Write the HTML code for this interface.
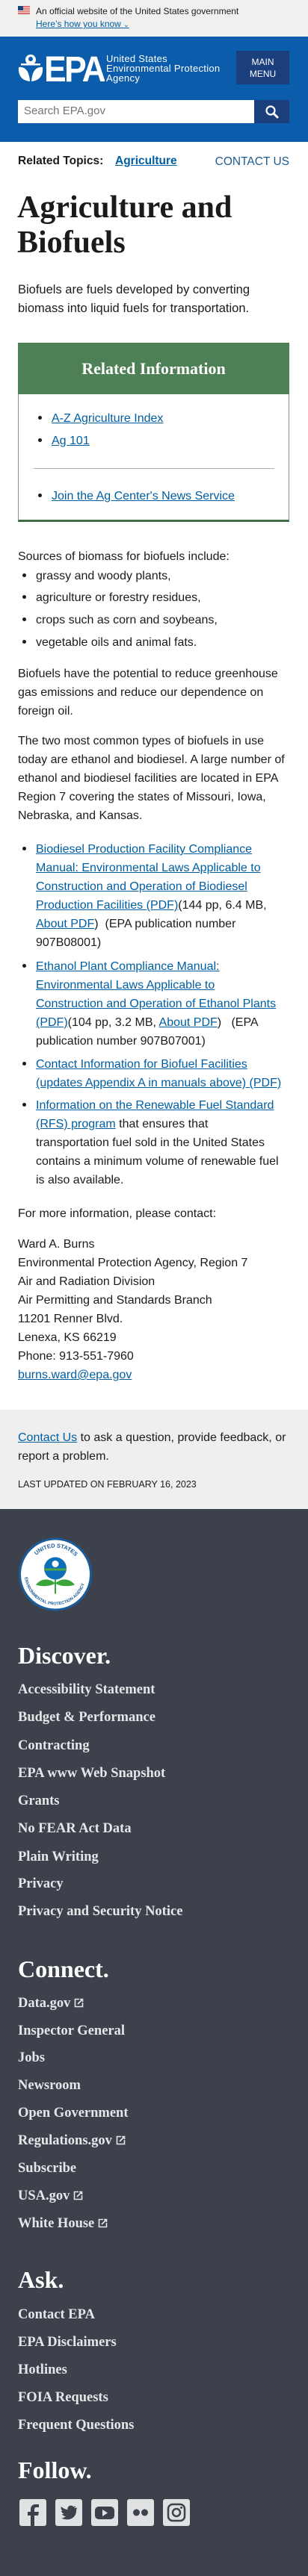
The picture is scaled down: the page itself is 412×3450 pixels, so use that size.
<!DOCTYPE html>
<html><head><meta charset="utf-8">
<style>
*{margin:0;padding:0;box-sizing:border-box}
body{width:412px;height:3450px;position:relative;background:#fff;font-family:"Liberation Sans",sans-serif;color:#1b1b1b;overflow:hidden}
.a{position:absolute;white-space:nowrap}
a{color:#005ea2;text-decoration:underline}
.t{font-size:16px;line-height:25px}
.ser{font-family:"Liberation Serif",serif;font-weight:bold}
.fl{position:absolute;left:24px;font-family:"Liberation Serif",serif;font-weight:bold;font-size:18.5px;color:#e6e6e8;white-space:nowrap;line-height:22px}
.fh{position:absolute;left:24px;font-family:"Liberation Serif",serif;font-weight:bold;font-size:32px;color:#fff;line-height:36px}
.ext{display:inline-block;width:13px;height:13px;margin-left:5px;vertical-align:-1px}
.ico{position:absolute;top:3347px;width:36px;height:36px;background:#dfe1e2;border-radius:3px;overflow:hidden}
.dot{position:absolute;width:5px;height:5px;border-radius:50%;background:#1b1b1b}
</style></head><body>
<div style="position:absolute;left:0;top:0;width:412px;height:49px;background:#f0f0f0"></div>
<svg class="a" style="left:24px;top:8px" width="16" height="11" viewBox="0 0 16 11"><rect width="16" height="11" fill="#fff"/><g fill="#d83933"><rect y="0" width="16" height="1.2"/><rect y="2.4" width="16" height="1.2"/><rect y="4.8" width="16" height="1.2"/><rect y="7.2" width="16" height="1.2"/><rect y="9.6" width="16" height="1.4"/></g><rect width="7" height="6" fill="#1a4480"/></svg>
<div class="a" style="left:48px;top:8px;font-size:12px;line-height:14px">An official website of the United States government</div>
<div class="a" style="left:48px;top:25px;font-size:12px;line-height:14px;color:#005ea2;text-decoration:underline">Here’s how you know <span style="text-decoration:none;font-size:9px">&#8964;</span></div>
<div style="position:absolute;left:0;top:49px;width:412px;height:141px;background:#0b5cab"></div>
<svg class="a" style="left:24px;top:72px" width="116" height="38" viewBox="0 0 116 38">
<g fill="#fff">
<circle cx="17" cy="8" r="7"/><circle cx="17" cy="7" r="3" fill="#0b5cab"/><rect x="4" y="13" width="26" height="2.5"/>
<path d="M1 18 C9 17 15 22 16 37 C6 36 0 30 1 18Z"/><path d="M33 18 C25 17 19 22 18 37 C28 36 34 30 33 18Z"/>
<text x="35" y="37" font-family="Liberation Sans" font-weight="bold" font-size="48" letter-spacing="-3" textLength="80" lengthAdjust="spacingAndGlyphs">EPA</text>
</g></svg>
<div class="a" style="left:142px;top:72px;color:#fff;font-size:13px;line-height:13px;letter-spacing:0.3px">United States<br>Environmental Protection<br>Agency</div>
<div class="a" style="left:316px;top:68px;width:71px;height:45px;background:#1b3e7d;color:#fff;font-size:12px;line-height:16px;text-align:center;padding-top:7px">MAIN<br>MENU</div>
<div class="a" style="left:24px;top:134px;width:316px;height:31px;background:#fff;font-size:15px;color:#71767a;padding:6px 8px">Search EPA.gov</div>
<div class="a" style="left:340px;top:134px;width:47px;height:31px;background:#1b3e7d"></div>
<svg class="a" style="left:354px;top:140px" width="20" height="20" viewBox="0 0 20 20"><circle cx="8" cy="8" r="5.5" fill="none" stroke="#fff" stroke-width="2.2"/><path d="M12 12 L17 17" stroke="#fff" stroke-width="3" stroke-linecap="round"/></svg>
<div class="a" style="left:24px;top:206px;font-size:15.5px;font-weight:bold;line-height:20px">Related Topics:</div>
<a class="a" style="left:154px;top:206px;font-size:15.5px;font-weight:bold;line-height:20px">Agriculture</a>
<div class="a" style="right:25px;top:207px;font-size:15.5px;color:#1f5a8f;line-height:20px">CONTACT US</div>
<div class="a ser" style="left:23px;top:255px;font-size:42px;line-height:47px">Agriculture and<br>Biofuels</div>
<div class="a t" style="left:24px;top:376px;font-size:16.5px">Biofuels are fuels developed by converting<br>biomass into liquid fuels for transportation.</div>
<div class="a" style="left:24px;top:459px;width:363px;height:240px;border:1px solid #8a8f94;border-bottom:3px solid #3f6b45"></div>
<div class="a ser" style="left:24px;top:459px;width:363px;height:69px;background:#4e8055;color:#fff;font-size:22px;text-align:center;line-height:69px">Related Information</div>
<div class="dot" style="left:51px;top:557px"></div><a class="a t" style="left:69px;top:548px">A-Z Agriculture Index</a>
<div class="dot" style="left:51px;top:587px"></div><a class="a t" style="left:69px;top:578px">Ag 101</a>
<div class="a" style="left:45px;top:627px;width:322px;height:1px;background:#a9aeb1"></div>
<div class="dot" style="left:51px;top:661px"></div><a class="a t" style="left:69px;top:652px">Join the Ag Center's News Service</a>
<div class="a t" style="left:24px;top:733px">Sources of biomass for biofuels include:</div>
<div class="dot" style="left:30px;top:768px"></div><div class="a t" style="left:48px;top:759px">grassy and woody plants,</div>
<div class="dot" style="left:30px;top:797px"></div><div class="a t" style="left:48px;top:788px">agriculture or forestry residues,</div>
<div class="dot" style="left:30px;top:827px"></div><div class="a t" style="left:48px;top:818px">crops such as corn and soybeans,</div>
<div class="dot" style="left:30px;top:857px"></div><div class="a t" style="left:48px;top:848px">vegetable oils and animal fats.</div>
<div class="a t" style="left:24px;top:890px">Biofuels have the potential to reduce greenhouse<br>gas emissions and reduce our dependence on<br>foreign oil.</div>
<div class="a t" style="left:24px;top:980px">The two most common types of biofuels in use<br>today are ethanol and biodiesel. A large number of<br>ethanol and biodiesel facilities are located in EPA<br>Region 7 covering the states of Missouri, Iowa,<br>Nebraska, and Kansas.</div>
<div class="dot" style="left:30px;top:1134px"></div>
<div class="a t" style="left:48px;top:1125px"><a>Biodiesel Production Facility Compliance</a><br><a>Manual: Environmental Laws Applicable to</a><br><a>Construction and Operation of Biodiesel</a><br><a>Production Facilities (PDF)</a>(144 pp, 6.4 MB,<br><a>About PDF</a>)&nbsp; (EPA publication number<br>907B08001)</div>
<div class="dot" style="left:30px;top:1291px"></div>
<div class="a t" style="left:48px;top:1282px"><a>Ethanol Plant Compliance Manual:</a><br><a>Environmental Laws Applicable to</a><br><a>Construction and Operation of Ethanol Plants</a><br><a>(PDF)</a>(104 pp, 3.2 MB, <a>About PDF</a>)&nbsp;&nbsp; (EPA<br>publication number 907B07001)</div>
<div class="dot" style="left:30px;top:1422px"></div>
<div class="a t" style="left:48px;top:1413px"><a>Contact Information for Biofuel Facilities</a><br><a>(updates Appendix A in manuals above) (PDF)</a></div>
<div class="dot" style="left:30px;top:1477px"></div>
<div class="a t" style="left:48px;top:1468px"><a>Information on the Renewable Fuel Standard</a><br><a>(RFS) program</a> that ensures that<br>transportation fuel sold in the United States<br>contains a minimum volume of renewable fuel<br>is also available.</div>
<div class="a t" style="left:24px;top:1613px">For more information, please contact:</div>
<div class="a t" style="left:24px;top:1654px">Ward A. Burns<br>Environmental Protection Agency, Region 7<br>Air and Radiation Division<br>Air Permitting and Standards Branch<br>11201 Renner Blvd.<br>Lenexa, KS 66219<br>Phone: 913-551-7960<br><a>burns.ward@epa.gov</a></div>
<div class="a" style="left:0;top:1888px;width:412px;height:133px;background:#efefef"></div>
<div class="a t" style="left:24px;top:1913px"><a>Contact Us</a> to ask a question, provide feedback, or<br>report a problem.</div>
<div class="a" style="left:24px;top:1980px;font-size:12.5px;line-height:16px">LAST UPDATED ON FEBRUARY 16, 2023</div>
<div class="a" style="left:0;top:2021px;width:412px;height:1429px;background:#3d414c"></div>
<svg class="a" style="left:24px;top:2057px" width="100" height="103" viewBox="0 0 100 100">
<circle cx="50" cy="50" r="49" fill="#1a5c9a"/><circle cx="50" cy="50" r="46" fill="#fff"/>
<defs><path id="arc" d="M14 50 A36 36 0 1 1 86 50"/><path id="arc2" d="M9 50 A41 41 0 0 0 91 50"/></defs>
<text font-size="7.5" font-weight="bold" fill="#1a5c9a" font-family="Liberation Sans"><textPath href="#arc" startOffset="25%">UNITED STATES</textPath></text>
<text font-size="5.6" font-weight="bold" fill="#1a5c9a" font-family="Liberation Sans"><textPath href="#arc2" startOffset="3%">ENVIRONMENTAL PROTECTION AGENCY</textPath></text>
<circle cx="50" cy="42" r="15" fill="#0e6fb8"/><rect x="35" y="42" width="30" height="3" fill="#4aa54a"/><circle cx="50" cy="36" r="4.5" fill="#fff"/>
<path d="M50 62 C41 54 30 56 24 64 C33 67 44 66 50 62Z M50 62 C59 54 70 56 76 64 C67 67 56 66 50 62Z" fill="#3aa53a"/><path d="M50 57 L50 76" stroke="#3aa53a" stroke-width="2"/>
</svg>
<div class="fh" style="top:2199px">Discover.</div>
<div class="fl" style="top:2252px">Accessibility Statement</div>
<div class="fl" style="top:2289px">Budget &amp; Performance</div>
<div class="fl" style="top:2327px">Contracting</div>
<div class="fl" style="top:2364px">EPA www Web Snapshot</div>
<div class="fl" style="top:2401px">Grants</div>
<div class="fl" style="top:2438px">No FEAR Act Data</div>
<div class="fl" style="top:2476px">Plain Writing</div>
<div class="fl" style="top:2512px">Privacy</div>
<div class="fl" style="top:2549px">Privacy and Security Notice</div>
<div class="fh" style="top:2619px">Connect.</div>
<div class="fl" style="top:2672px">Data.gov<svg class="ext" viewBox="0 0 13 13"><path d="M7 1.5 H1.5 V11.5 H11.5 V6" fill="none" stroke="#e6e6e8" stroke-width="1.6"/><path d="M5 8 L11.5 1.5 M8 1.5 H11.5 V5" fill="none" stroke="#e6e6e8" stroke-width="1.6"/></svg></div>
<div class="fl" style="top:2709px">Inspector General</div>
<div class="fl" style="top:2745px">Jobs</div>
<div class="fl" style="top:2782px">Newsroom</div>
<div class="fl" style="top:2819px">Open Government</div>
<div class="fl" style="top:2856px">Regulations.gov<svg class="ext" viewBox="0 0 13 13"><path d="M7 1.5 H1.5 V11.5 H11.5 V6" fill="none" stroke="#e6e6e8" stroke-width="1.6"/><path d="M5 8 L11.5 1.5 M8 1.5 H11.5 V5" fill="none" stroke="#e6e6e8" stroke-width="1.6"/></svg></div>
<div class="fl" style="top:2893px">Subscribe</div>
<div class="fl" style="top:2930px">USA.gov<svg class="ext" viewBox="0 0 13 13"><path d="M7 1.5 H1.5 V11.5 H11.5 V6" fill="none" stroke="#e6e6e8" stroke-width="1.6"/><path d="M5 8 L11.5 1.5 M8 1.5 H11.5 V5" fill="none" stroke="#e6e6e8" stroke-width="1.6"/></svg></div>
<div class="fl" style="top:2967px">White House<svg class="ext" viewBox="0 0 13 13"><path d="M7 1.5 H1.5 V11.5 H11.5 V6" fill="none" stroke="#e6e6e8" stroke-width="1.6"/><path d="M5 8 L11.5 1.5 M8 1.5 H11.5 V5" fill="none" stroke="#e6e6e8" stroke-width="1.6"/></svg></div>
<div class="fh" style="top:3035px">Ask.</div>
<div class="fl" style="top:3089px">Contact EPA</div>
<div class="fl" style="top:3126px">EPA Disclaimers</div>
<div class="fl" style="top:3163px">Hotlines</div>
<div class="fl" style="top:3200px">FOIA Requests</div>
<div class="fl" style="top:3237px">Frequent Questions</div>
<div class="fh" style="top:3290px">Follow.</div>
<div class="ico" style="left:26px"><svg width="36" height="36" viewBox="0 0 36 36"><path d="M20 36 V22 H25 L26 17 H20 V14 C20 12 21 11 23 11 H26 V7 H22 C17 7 15 10 15 14 V17 H11 V22 H15 V36Z" fill="#3d414c"/></svg></div>
<div class="ico" style="left:74px"><svg width="36" height="36" viewBox="0 0 36 36"><path d="M28 11 C27 12 26 12 25 12 C26 11 27 10 27 9 C26 10 25 10 24 10 C22 8 18 8 17 11 C16 12 16 13 17 14 C13 14 10 12 8 10 C7 12 8 15 10 16 C9 16 8 16 8 15 C8 18 10 19 12 20 C11 20 10 20 9 20 C10 22 12 23 14 23 C12 25 9 26 7 25 C18 31 29 25 28 14 C29 13 29 12 28 11Z" fill="#3d414c"/></svg></div>
<div class="ico" style="left:122px"><svg width="36" height="36" viewBox="0 0 36 36"><rect x="5" y="10" width="26" height="17" rx="5" fill="#3d414c"/><path d="M15 14 L22 18.5 L15 23Z" fill="#dfe1e2"/></svg></div>
<div class="ico" style="left:170px"><svg width="36" height="36" viewBox="0 0 36 36"><circle cx="12.5" cy="18" r="4.5" fill="#3d414c"/><circle cx="23.5" cy="18" r="4.5" fill="#3d414c"/></svg></div>
<div class="ico" style="left:218px"><svg width="36" height="36" viewBox="0 0 36 36"><rect x="7" y="7" width="22" height="22" rx="6" fill="none" stroke="#3d414c" stroke-width="2.5"/><circle cx="18" cy="18" r="5" fill="none" stroke="#3d414c" stroke-width="2.5"/><circle cx="24.5" cy="11.5" r="1.5" fill="#3d414c"/></svg></div>
</body></html>
